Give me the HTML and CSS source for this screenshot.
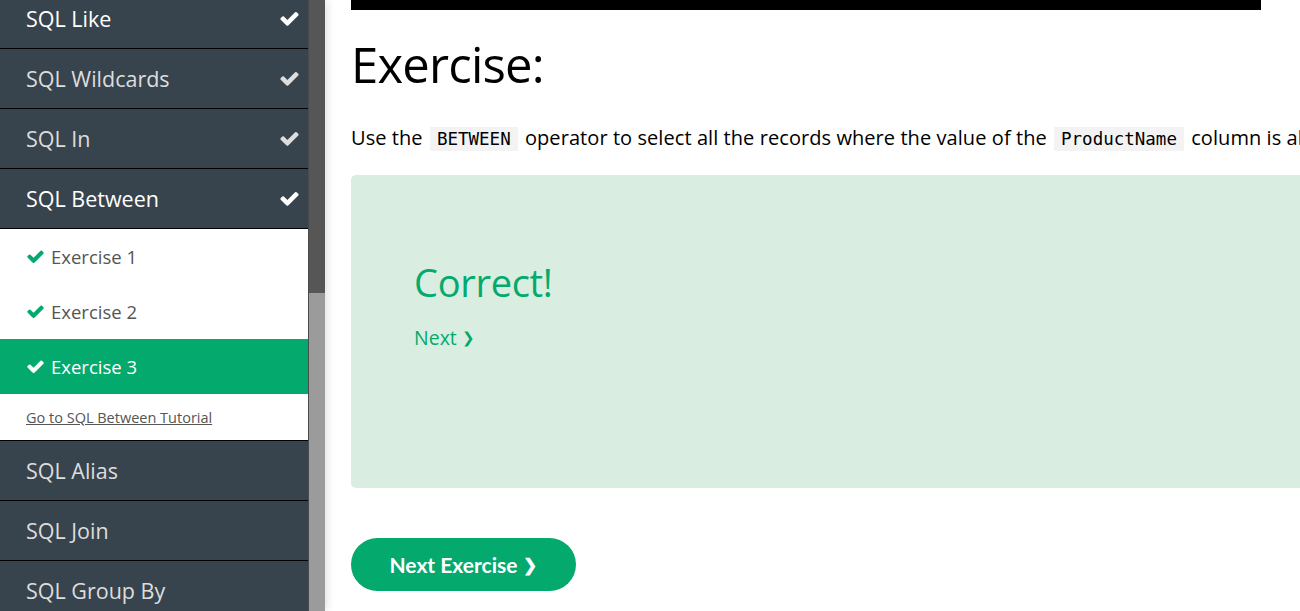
FILE: index.html
```html
<!DOCTYPE html>
<html lang="en">
<head>
<meta charset="utf-8">
<title>SQL Between Exercise</title>
<link rel="stylesheet" href="styles.css">
</head>
<body>
<div class="layout">
  <aside class="sidebar">
    <nav class="menu">
      <div class="menu-inner">
        <a class="item bright">SQL Like<svg class="chk" viewBox="0 0 1792 1792"><path d="M1671 566q0 40-28 68l-724 724-136 136q-28 28-68 28t-68-28l-136-136-362-362q-28-28-28-68t28-68l136-136q28-28 68-28t68 28l294 295 656-657q28-28 68-28t68 28l136 136q28 28 28 68z"/></svg></a>
        <a class="item">SQL Wildcards<svg class="chk" viewBox="0 0 1792 1792"><path d="M1671 566q0 40-28 68l-724 724-136 136q-28 28-68 28t-68-28l-136-136-362-362q-28-28-28-68t28-68l136-136q28-28 68-28t68 28l294 295 656-657q28-28 68-28t68 28l136 136q28 28 28 68z"/></svg></a>
        <a class="item">SQL In<svg class="chk" viewBox="0 0 1792 1792"><path d="M1671 566q0 40-28 68l-724 724-136 136q-28 28-68 28t-68-28l-136-136-362-362q-28-28-28-68t28-68l136-136q28-28 68-28t68 28l294 295 656-657q28-28 68-28t68 28l136 136q28 28 28 68z"/></svg></a>
        <a class="item bright">SQL Between<svg class="chk" viewBox="0 0 1792 1792"><path d="M1671 566q0 40-28 68l-724 724-136 136q-28 28-68 28t-68-28l-136-136-362-362q-28-28-28-68t28-68l136-136q28-28 68-28t68 28l294 295 656-657q28-28 68-28t68 28l136 136q28 28 28 68z"/></svg></a>
        <div class="sub">
          <a class="ex"><svg class="exchk" viewBox="0 0 1792 1792"><path d="M1671 566q0 40-28 68l-724 724-136 136q-28 28-68 28t-68-28l-136-136-362-362q-28-28-28-68t28-68l136-136q28-28 68-28t68 28l294 295 656-657q28-28 68-28t68 28l136 136q28 28 28 68z"/></svg>Exercise 1</a>
          <a class="ex"><svg class="exchk" viewBox="0 0 1792 1792"><path d="M1671 566q0 40-28 68l-724 724-136 136q-28 28-68 28t-68-28l-136-136-362-362q-28-28-28-68t28-68l136-136q28-28 68-28t68 28l294 295 656-657q28-28 68-28t68 28l136 136q28 28 28 68z"/></svg>Exercise 2</a>
          <a class="ex active"><svg class="exchk" viewBox="0 0 1792 1792"><path d="M1671 566q0 40-28 68l-724 724-136 136q-28 28-68 28t-68-28l-136-136-362-362q-28-28-28-68t28-68l136-136q28-28 68-28t68 28l294 295 656-657q28-28 68-28t68 28l136 136q28 28 28 68z"/></svg>Exercise 3</a>
          <div class="tut"><a href="#">Go to SQL Between Tutorial</a></div>
        </div>
        <a class="item">SQL Alias</a>
        <a class="item">SQL Join</a>
        <a class="item">SQL Group By</a>
      </div>
    </nav>
    <div class="scrollbar"><div class="thumb"></div></div>
  </aside>
  <main class="main">
    <div class="topbar"></div>
    <h2 class="title">Exercise:</h2>
    <p class="question">Use the <code>BETWEEN</code> operator to select all the records where the value of the <code>ProductName</code> column is alphabetically between 'Carnarvon Tigers' and 'Mozzarella di Giovanni'.</p>
    <div class="result">
      <div class="correct">Correct!</div>
      <a class="next" href="#">Next <span class="chev">&#10095;</span></a>
    </div>
    <a class="btn" href="#">Next Exercise <span class="chev">&#10095;</span></a>
  </main>
</div>
</body>
</html>
```
FILE: styles.css
```css
html, body {
  margin: 0;
  padding: 0;
  width: 1300px;
  height: 611px;
  overflow: hidden;
  background: #fff;
  font-family: "Open Sans", "Noto Sans", sans-serif;
}
.layout {
  display: flex;
  height: 611px;
}
.sidebar {
  display: flex;
  width: 325px;
  flex: none;
  height: 611px;
  box-shadow: 2px 0 8px rgba(0,0,0,0.12);
  position: relative;
  z-index: 2;
}
.menu {
  width: 308px;
  background: #38444d;
  overflow: hidden;
}
.menu-inner {
  margin-top: -11px;
}
.item {
  display: flex;
  align-items: center;
  justify-content: space-between;
  height: 59px;
  padding: 0 8px 0 26px;
  border-bottom: 1px solid #000;
  color: #ddd;
  font-size: 21.5px;
  letter-spacing: 0;
}
.item.bright { color: #fff; }
.chk {
  width: 21px;
  height: 21px;
  fill: #ddd;
}
.item.bright .chk { fill: #fff; }
.sub {
  background: #fff;
  border-bottom: 1px solid #000;
}
.ex {
  display: flex;
  align-items: center;
  height: 55px;
  padding-left: 26px;
  color: #555;
  font-size: 18.5px;
}
.exchk {
  width: 19px;
  height: 19px;
  fill: #04aa6d;
  margin-right: 6px;
}
.ex.active {
  background: #04aa6d;
  color: #fff;
}
.ex.active .exchk { fill: #fff; }
.tut {
  height: 46px;
  display: flex;
  align-items: center;
  padding-left: 26px;
}
.tut a {
  color: #555;
  font-size: 14.5px;
}
.scrollbar {
  width: 17px;
  background: #9b9b9b;
  border-left: 1px solid #4a4a4a;
  box-sizing: border-box;
}
.thumb {
  height: 293px;
  background: #565656;
}
.main {
  flex: none;
  width: 1100px;
  padding-left: 26px;
}
.topbar {
  width: 910px;
  height: 10px;
  background: #000;
}
.title {
  margin: 28px 0 0;
  font-size: 49px;
  font-weight: 400;
  line-height: 52px;
  letter-spacing: -0.8px;
  color: #000;
}
.question {
  margin: 36px 0 0;
  font-size: 20px;
  line-height: 24px;
  white-space: nowrap;
  color: #000;
  letter-spacing: 0.07px;
}
.question code {
  font-family: "DejaVu Sans Mono", "Liberation Mono", monospace;
  font-size: 17.5px;
  letter-spacing: 0;
  background: #f3f3f3;
  padding: 2px 7px;
  margin: 0 2px;
}
.result {
  margin-top: 24px;
  height: 313px;
  background: #d9eee1;
  border-radius: 5px;
  padding: 0 0 0 63px;
  box-sizing: border-box;
  padding-top: 83px;
}
.correct {
  font-size: 38px;
  color: #04aa6d;
  line-height: 48px;
  letter-spacing: -0.3px;
}
.next {
  display: inline-block;
  margin-top: 18px;
  color: #04aa6d;
  font-size: 19.5px;
  text-decoration: none;
}
.next .chev {
  font-size: 15px;
  position: relative;
  top: -2px;
}
.btn {
  display: inline-flex;
  align-items: center;
  justify-content: center;
  margin-top: 50px;
  width: 225px;
  height: 53px;
  border-radius: 27px;
  background: #04aa6d;
  color: #fff;
  font-family: "Lato", sans-serif;
  font-weight: 700;
  font-size: 21px;
  text-decoration: none;
  box-sizing: border-box;
}
.btn .chev {
  font-size: 17px;
  margin-left: 6px;
}
```
